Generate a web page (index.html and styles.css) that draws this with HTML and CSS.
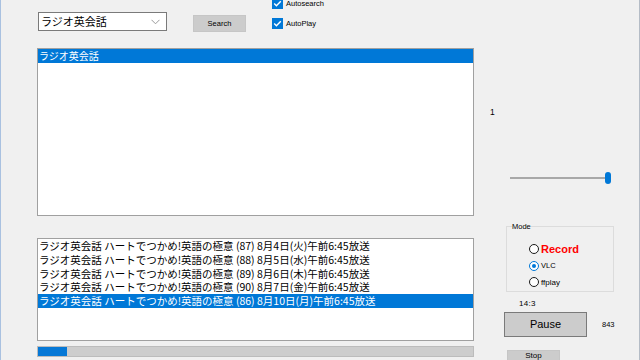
FILE: index.html
```html
<!DOCTYPE html>
<html lang="ja">
<head>
  <meta charset="UTF-8">
  <meta name="viewport" content="width=device-width, initial-scale=1.0">
  <title>ラジオ英会話</title>
  <link rel="stylesheet" href="styles.css">
</head>
<body>
  <div class="window">
    <div class="left">
      <div class="topbar">
        <div class="combo">
          <span class="combo-text">ラジオ英会話</span>
          <svg class="chevron" width="9" height="6" viewBox="0 0 9 6"><path d="M0.5 0.8 L4.5 4.8 L8.5 0.8" fill="none" stroke="#9a9a9a" stroke-width="1"/></svg>
        </div>
        <button class="search-btn">Search</button>
        <div class="checks">
          <label class="check">
            <span class="box"><svg width="11" height="11" viewBox="0 0 11 11"><path d="M2.2 5.6 L4.4 7.8 L8.8 3.2" fill="none" stroke="#fff" stroke-width="1.4"/></svg></span>
            Autosearch
          </label>
          <label class="check">
            <span class="box"><svg width="11" height="11" viewBox="0 0 11 11"><path d="M2.2 5.6 L4.4 7.8 L8.8 3.2" fill="none" stroke="#fff" stroke-width="1.4"/></svg></span>
            AutoPlay
          </label>
        </div>
      </div>

      <div class="listbox list-programs">
        <div class="item selected">ラジオ英会話</div>
      </div>

      <div class="listbox list-episodes">
        <div class="item">ラジオ英会話 ハートでつかめ!英語の極意 (87) 8月4日(火)午前6:45放送</div>
        <div class="item">ラジオ英会話 ハートでつかめ!英語の極意 (88) 8月5日(水)午前6:45放送</div>
        <div class="item">ラジオ英会話 ハートでつかめ!英語の極意 (89) 8月6日(木)午前6:45放送</div>
        <div class="item">ラジオ英会話 ハートでつかめ!英語の極意 (90) 8月7日(金)午前6:45放送</div>
        <div class="item selected">ラジオ英会話 ハートでつかめ!英語の極意 (86) 8月10日(月)午前6:45放送</div>
      </div>

      <div class="progress"><div class="progress-fill" style="width: 29px;"></div></div>
    </div>

    <div class="right">
      <div class="level">1</div>
      <div class="trackbar">
        <div class="track-line"></div>
        <div class="track-thumb"></div>
      </div>

      <fieldset class="mode">
        <legend>Mode</legend>
        <label class="radio record"><span class="dot"></span>Record</label>
        <label class="radio"><span class="dot checked"></span>VLC</label>
        <label class="radio"><span class="dot"></span>ffplay</label>
      </fieldset>

      <div class="time">14:3</div>
      <div class="pause-row">
        <button class="pause-btn">Pause</button>
        <span class="count">843</span>
      </div>
      <button class="stop-btn">Stop</button>
    </div>
  </div>
</body>
</html>
```

FILE: styles.css
```css
html, body {
  margin: 0;
  padding: 0;
}
body {
  width: 640px;
  height: 360px;
  overflow: hidden;
  background-color: #f0f0f0;
  font-family: "Liberation Sans", "Noto Sans CJK JP", sans-serif;
  color: #000;
}
.window {
  display: flex;
  height: 360px;
  box-sizing: border-box;
  border-left: 1px solid #a9c1e0;
  border-right: 1px solid #b4bcc6;
}
.left {
  margin-left: 36px;
  width: 437px;
  display: flex;
  flex-direction: column;
}
.topbar {
  height: 48px;
  display: flex;
  align-items: flex-start;
}
.combo {
  margin-top: 12px;
  margin-left: 1px;
  width: 129px;
  height: 19px;
  box-sizing: border-box;
  border: 1px solid #7a7a7a;
  background: #fff;
  display: flex;
  align-items: center;
  justify-content: space-between;
  padding: 0 6px 0 2px;
}
.combo-text {
  font-family: "Noto Sans CJK JP", sans-serif;
  font-size: 11px;
  line-height: 17px;
}
.search-btn {
  margin-left: 26px;
  margin-top: 15px;
  width: 53px;
  height: 17px;
  padding: 0;
  background: #cccccc;
  border: 1px solid #c6c6c6;
  font-family: "Liberation Sans", sans-serif;
  font-size: 7.5px;
  color: #000;
}
.checks {
  margin-left: 26px;
  margin-top: -2px;
  display: flex;
  flex-direction: column;
  gap: 9px;
}
.check {
  display: flex;
  align-items: center;
  gap: 3px;
  height: 11px;
  font-size: 7.5px;
}
.box {
  width: 11px;
  height: 11px;
  background: #0078d7;
  display: flex;
}
.listbox {
  box-sizing: border-box;
  border: 1px solid #a0a0a0;
  background: #fff;
  font-family: "Noto Sans CJK JP", sans-serif;
  font-size: 10.5px;
}
.list-programs {
  height: 168px;
  font-size: 10px;
}
.list-episodes {
  margin-top: 22px;
  height: 103px;
}
.item {
  height: 13.75px;
  line-height: 13.75px;
  padding-left: 1px;
  white-space: nowrap;
  overflow: hidden;
}
.list-programs .item {
  height: 14px;
  line-height: 14px;
}
.item.selected {
  background: #0078d7;
  color: #fff;
}
.progress {
  margin-top: 5px;
  height: 11px;
  background: #cdcdcd;
  border: 1px solid #bcbcbc;
  box-sizing: border-box;
}
.progress-fill {
  height: 100%;
  background: #0678d6;
}
.right {
  display: flex;
  flex-direction: column;
  align-items: flex-start;
}
.level {
  margin: 107px 0 0 16px;
  font-size: 8.5px;
  line-height: 10px;
}
.trackbar {
  margin: 55px 0 0 36px;
  width: 102px;
  height: 13px;
  display: flex;
  align-items: center;
}
.track-line {
  width: 96px;
  height: 2px;
  background: #a8a8a8;
}
.track-thumb {
  width: 6px;
  height: 12px;
  margin-left: -1px;
  border-radius: 3px;
  background: #0078d7;
}
.mode {
  margin: 38px 0 0 32px;
  width: 108px;
  height: 73px;
  box-sizing: border-box;
  padding: 10px 0 0 22px;
  border: 1px solid #dcdcdc;
  display: flex;
  flex-direction: column;
}
.mode legend {
  padding: 0;
  margin-left: -17px;
  font-size: 7.5px;
  line-height: 9px;
}
.radio {
  display: flex;
  align-items: center;
  gap: 2px;
  height: 16.5px;
  font-size: 7.5px;
}
.radio:last-child {
  font-size: 8px;
}
.dot {
  width: 10px;
  height: 10px;
  box-sizing: border-box;
  border: 1px solid #1a1a1a;
  border-radius: 50%;
  background: #fff;
  display: flex;
  align-items: center;
  justify-content: center;
}
.dot.checked {
  border-color: #0078d7;
}
.dot.checked::after {
  content: "";
  width: 4px;
  height: 4px;
  border-radius: 50%;
  background: #0078d7;
}
.record {
  color: #ff0000;
  font-weight: bold;
  font-size: 11px;
}
.time {
  margin: 7px 0 0 45px;
  font-size: 8px;
  line-height: 10px;
  letter-spacing: 0.3px;
}
.pause-row {
  margin: 3px 0 0 30px;
  display: flex;
  align-items: center;
}
.pause-btn {
  width: 83px;
  height: 25px;
  padding: 0;
  background: #cccccc;
  border: 1px solid #7a7a7a;
  font-family: "Liberation Sans", sans-serif;
  font-size: 11px;
  color: #000;
}
.count {
  margin-left: 15px;
  font-size: 7.5px;
}
.stop-btn {
  margin: 13px 0 0 33px;
  width: 53px;
  height: 22px;
  padding: 0 0 8px;
  background: #cccccc;
  border: 1px solid #c6c6c6;
  font-family: "Liberation Sans", sans-serif;
  font-size: 8px;
  color: #000;
}
```
